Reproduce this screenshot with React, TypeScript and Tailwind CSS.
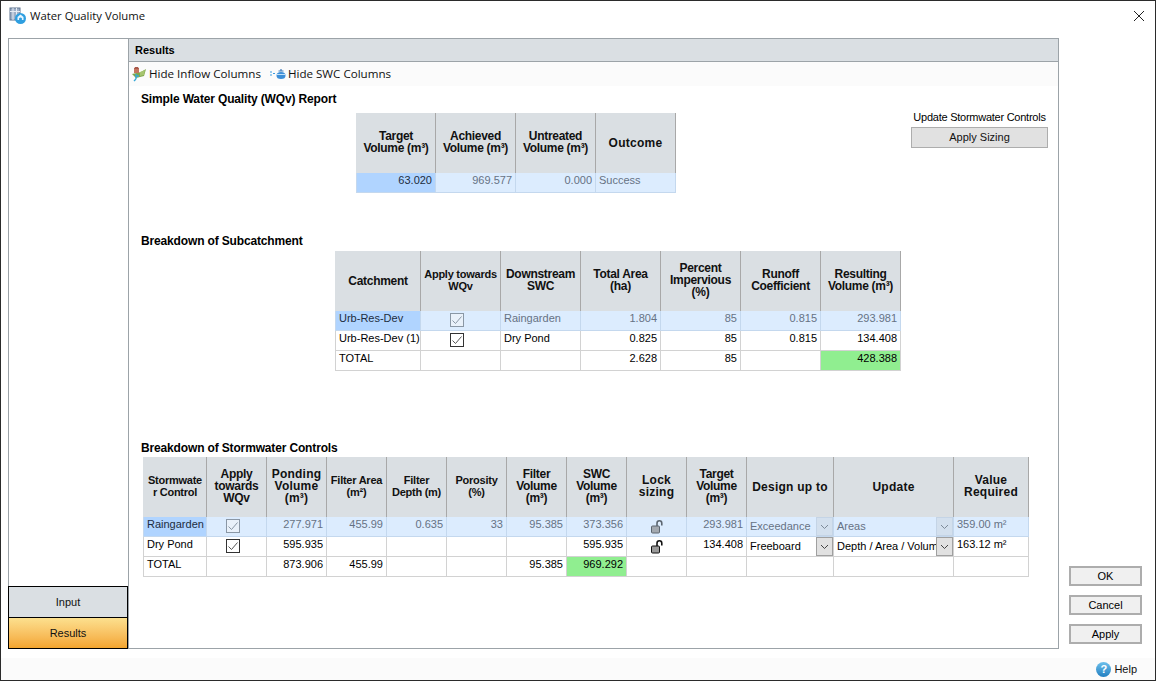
import type { ReactNode } from "react"

const sans = "font-['Liberation_Sans',Arial,sans-serif]"
const ui = "font-['Open_Sans','Noto_Sans',sans-serif]"

const normal = "pb-[3px] text-[12px] tracking-[-0.3px]"
const tight = "pb-[3px] text-[11px] tracking-[-0.25px]"
const wide = "pb-[3px] text-[12px] tracking-[0.25px]"
const single = "pb-[1px] text-[12px] tracking-[0.25px]"

function WindowIcon() {
  return (
    <svg width="18" height="18" viewBox="0 0 18 18">
      <rect x="1" y="1" width="10" height="12" fill="#9fb0c8" stroke="#5f7590" />
      <path d="M4 1v12M7.5 1v12M1 4.5h10" stroke="#e6ecf4" strokeWidth="1" />
      <circle cx="11.5" cy="11.5" r="5.5" fill="#2f9fe0" />
      <path d="M8.5 10l3-2.5 3 2.5v3h-6z" fill="#e8f6ff" />
      <circle cx="11.5" cy="12" r="1.6" fill="#2f9fe0" />
    </svg>
  )
}

function InflowIcon() {
  return (
    <svg width="16" height="16" viewBox="0 0 16 16">
      <path d="M1 8l9-2 5-3-2 7-8 2z" fill="#7fa64c" />
      <path d="M9 6l5-2-1 5-4 1z" fill="#a6c56f" />
      <path d="M3 2h5v5H3z" fill="#c4755f" />
      <path d="M4 1h3l1 2H3z" fill="#a8584a" />
      <path d="M5 8v5M5 13l-2 2M5 10h3" stroke="#35a8d8" strokeWidth="1.4" fill="none" />
    </svg>
  )
}

function SwcIcon() {
  return (
    <svg width="16" height="12" viewBox="0 0 16 12">
      <path d="M0 4h2M0 7h2M3 5.5h2" stroke="#3b9ce0" strokeWidth="1" />
      <ellipse cx="11" cy="7.5" rx="4.5" ry="3.5" fill="#3d8fd8" />
      <path d="M7 6.5h8" stroke="#bfe0f8" strokeWidth="1" />
      <path d="M8.5 3h5M11 1v2.5" stroke="#3978b8" strokeWidth="1.2" />
    </svg>
  )
}

function LockIcon({ faded }: { faded?: boolean }) {
  return (
    <svg className="mx-auto mt-[3px]" width="14" height="14" viewBox="0 0 14 14">
      <path d="M7 6V3.2a2.4 2.4 0 0 1 4.8 0V5.5" fill="none" stroke={faded ? "#5c6670" : "#111"} strokeWidth="1.6" />
      <path d="M8.8 3.4a1 1 0 0 1 1.3-1" fill="none" stroke="#fff" strokeWidth="0.6" />
      <rect x="1.5" y="6" width="8" height="7" rx="1" fill={faded ? "#a3a9b0" : "#9a9a9a"} stroke={faded ? "#5c6670" : "#111"} />
    </svg>
  )
}

function Check({ faded }: { faded?: boolean }) {
  return (
    <span className={`mt-[2px] mr-[8px] inline-flex h-[14px] w-[14px] items-center justify-center border ${faded ? "border-[#8a97a5] bg-[#e9f1fa]" : "border-[#333] bg-white"}`}>
      <svg width="12" height="12" viewBox="0 0 12 12">
        <path d="M1.5 6.5l3 3 6-7" fill="none" stroke={faded ? "#8a97a5" : "#555"} strokeWidth="1" />
      </svg>
    </span>
  )
}

function Combo({ text, faded }: { text: string; faded?: boolean }) {
  return (
    <div className="flex h-[19px] items-center justify-between overflow-hidden">
      <span className="overflow-hidden whitespace-nowrap pl-[3px]">{text}</span>
      <span className={`flex h-[19px] w-[17px] shrink-0 items-center justify-center border ${faded ? "border-[#c4d4e6] bg-[#d3e0ee]" : "border-[#a0a0a0] bg-[#e1e1e1]"}`}>
        <svg width="9" height="6" viewBox="0 0 9 6">
          <path d="M1 1l3.5 3.5L8 1" fill="none" stroke={faded ? "#7d8a98" : "#444"} strokeWidth="1" />
        </svg>
      </span>
    </div>
  )
}

type Cell = { v?: ReactNode; right?: boolean; center?: boolean; green?: boolean; flush?: boolean }

function Th({ children, first, cls = normal }: { children: ReactNode; first?: boolean; cls?: string }) {
  return (
    <th className={`h-[60px] whitespace-nowrap border-r border-r-[#a8a8a8] bg-[#dadfe3] px-0 pt-0 text-center align-middle font-bold leading-[12px] text-[#111] ${cls} ${first ? "border-l border-l-[#dadfe3]" : ""}`}>
      {children}
    </th>
  )
}

function Row({ cells, sel }: { cells: Cell[]; sel?: boolean }) {
  return (
    <tr>
      {cells.map((c, i) => {
        const tone = sel
          ? i === 0
            ? "border-[#c4d8ee] bg-[#b0d4ff] text-[#1c2c40]"
            : "border-[#c4d8ee] bg-[#dcecfe] text-[#667284]"
          : c.green
            ? "border-[#d2d2d2] bg-[#90ee90] text-black"
            : "border-[#d2d2d2] bg-white text-black"
        const align = c.right ? "pr-[3px] text-right" : c.center ? "text-center" : c.flush ? "" : "pl-[3px]"
        return (
          <td key={i} className={`h-[20px] overflow-hidden whitespace-nowrap border-b border-r p-0 align-top text-[11px] leading-[15px] ${i === 0 ? "border-l" : ""} ${tone} ${align}`}>
            {c.v}
          </td>
        )
      })}
    </tr>
  )
}

const r = (v?: ReactNode, green?: boolean): Cell => ({ v, right: true, green })
const l = (v?: ReactNode): Cell => ({ v })
const ctr = (v?: ReactNode): Cell => ({ v, center: true })

function SectionTitle({ children }: { children: ReactNode }) {
  return <div className="pl-[12px] text-[12px] font-bold leading-[14px] tracking-[-0.15px] text-black">{children}</div>
}

function SideButton({ children }: { children: ReactNode }) {
  return (
    <button className="h-[20px] w-[73px] border-2 border-[#adadad] bg-[#f0f0f0] text-[11px] leading-[14px] text-black">
      {children}
    </button>
  )
}

export default function App() {
  return (
    <div className={`flex h-[681px] w-[1156px] flex-col overflow-hidden border border-[#2b2b2b] bg-white ${sans}`}>
      {/* title bar */}
      <div className="flex h-[30px] shrink-0 items-center pl-[8px] pr-[10px]">
        <WindowIcon />
        <span className={`ml-[3px] text-[11.3px] text-[#111] ${ui}`}>Water Quality Volume</span>
        <svg className="ml-auto" width="12" height="12" viewBox="0 0 12 12">
          <path d="M1 1l10 10M11 1L1 11" stroke="#222" strokeWidth="1" />
        </svg>
      </div>

      <div className="flex min-h-0 flex-1 pl-[7px] pt-[7px]">
        {/* left nav */}
        <div className="flex h-[611px] w-[120px] shrink-0 flex-col">
          <div className="flex-1 border-l border-t border-[#9ca3a8]" />
          <div className="flex h-[31px] items-center justify-center border-x border-t border-black bg-[#dadfe3] text-[11px] text-[#111]">Input</div>
          <div className="flex h-[32px] items-center justify-center border border-black bg-gradient-to-b from-[#fce08e] to-[#f3a52e] text-[11px] text-[#111]">Results</div>
        </div>

        {/* results panel */}
        <div className="flex h-[611px] w-[931px] shrink-0 flex-col border border-[#9ca3a8]">
          <div className="flex h-[23px] shrink-0 items-center border-b border-[#9ca3a8] bg-[#dadfe3] pl-[6px] text-[11px] font-bold text-black">Results</div>
          <div className={`flex h-[24px] shrink-0 items-center bg-[#fbfbfb] pl-[2px] text-[11.6px] text-[#111] ${ui}`}>
            <InflowIcon />
            <span className="ml-[2px]">Hide Inflow Columns</span>
            <span className="ml-[9px]"><SwcIcon /></span>
            <span className="ml-[2px]">Hide SWC Columns</span>
          </div>

          <div className="mt-[6px]"><SectionTitle>Simple Water Quality (WQv) Report</SectionTitle></div>

          <div className="mt-[7px] flex pl-[227px]">
            <table className="w-[320px] table-fixed border-separate border-spacing-0">
              <colgroup>
                <col className="w-[80px]" /><col className="w-[80px]" /><col className="w-[80px]" /><col className="w-[80px]" />
              </colgroup>
              <thead>
                <tr>
                  <Th first>Target<br />Volume (m³)</Th>
                  <Th>Achieved<br />Volume (m³)</Th>
                  <Th>Untreated<br />Volume (m³)</Th>
                  <Th cls={single}>Outcome</Th>
                </tr>
              </thead>
              <tbody>
                <Row sel cells={[r("63.020"), r("969.577"), r("0.000"), l("Success")]} />
              </tbody>
            </table>
            <div className="ml-auto mr-[10px] -mt-[3px] flex w-[137px] flex-col items-center">
              <div className="whitespace-nowrap text-[11px] leading-[14px] tracking-[-0.25px] text-black">Update Stormwater Controls</div>
              <button className="mt-[3px] h-[21px] w-[137px] border border-[#adadad] bg-[#e1e1e1] text-[11px] text-[#111]">Apply Sizing</button>
            </div>
          </div>

          <div className="mt-[41px]"><SectionTitle>Breakdown of Subcatchment</SectionTitle></div>

          <div className="mt-[3px] pl-[206px]">
            <table className="w-[566px] table-fixed border-separate border-spacing-0">
              <colgroup>
                <col className="w-[86px]" /><col className="w-[80px]" /><col className="w-[80px]" /><col className="w-[80px]" /><col className="w-[80px]" /><col className="w-[80px]" /><col className="w-[80px]" />
              </colgroup>
              <thead>
                <tr>
                  <Th first cls="pb-[1px] text-[12px] tracking-[-0.3px]">Catchment</Th>
                  <Th cls={tight}>Apply towards<br />WQv</Th>
                  <Th>Downstream<br />SWC</Th>
                  <Th>Total Area<br />(ha)</Th>
                  <Th>Percent<br />Impervious<br />(%)</Th>
                  <Th>Runoff<br />Coefficient</Th>
                  <Th>Resulting<br />Volume (m³)</Th>
                </tr>
              </thead>
              <tbody>
                <Row sel cells={[l("Urb-Res-Dev"), ctr(<Check faded />), l("Raingarden"), r("1.804"), r("85"), r("0.815"), r("293.981")]} />
                <Row cells={[l("Urb-Res-Dev (1)"), ctr(<Check />), l("Dry Pond"), r("0.825"), r("85"), r("0.815"), r("134.408")]} />
                <Row cells={[l("TOTAL"), l(), l(), r("2.628"), r("85"), r(), r("428.388", true)]} />
              </tbody>
            </table>
          </div>

          <div className="mt-[70px]"><SectionTitle>Breakdown of Stormwater Controls</SectionTitle></div>

          <div className="mt-[2px] pl-[14px]">
            <table className="w-[886px] table-fixed border-separate border-spacing-0">
              <colgroup>
                <col className="w-[64px]" /><col className="w-[60px]" /><col className="w-[60px]" /><col className="w-[60px]" /><col className="w-[60px]" /><col className="w-[60px]" /><col className="w-[60px]" /><col className="w-[60px]" /><col className="w-[60px]" /><col className="w-[60px]" /><col className="w-[87px]" /><col className="w-[120px]" /><col className="w-[75px]" />
              </colgroup>
              <thead>
                <tr>
                  <Th first cls={tight}>Stormwate<br />r Control</Th>
                  <Th>Apply<br />towards<br />WQv</Th>
                  <Th cls={wide}>Ponding<br />Volume<br />(m³)</Th>
                  <Th cls={tight}>Filter Area<br />(m²)</Th>
                  <Th cls={tight}>Filter<br />Depth (m)</Th>
                  <Th cls={tight}>Porosity<br />(%)</Th>
                  <Th>Filter<br />Volume<br />(m³)</Th>
                  <Th>SWC<br />Volume<br />(m³)</Th>
                  <Th cls={wide}>Lock<br />sizing</Th>
                  <Th>Target<br />Volume<br />(m³)</Th>
                  <Th cls={single}>Design up to</Th>
                  <Th cls={single}>Update</Th>
                  <Th cls={wide}>Value<br />Required</Th>
                </tr>
              </thead>
              <tbody>
                <Row sel cells={[l("Raingarden"), ctr(<Check faded />), r("277.971"), r("455.99"), r("0.635"), r("33"), r("95.385"), r("373.356"), ctr(<LockIcon faded />), r("293.981"), { v: <Combo faded text="Exceedance" />, flush: true }, { v: <Combo faded text="Areas" />, flush: true }, l("359.00 m²")]} />
                <Row cells={[l("Dry Pond"), ctr(<Check />), r("595.935"), r(), r(), r(), r(), r("595.935"), ctr(<LockIcon />), r("134.408"), { v: <Combo text="Freeboard" />, flush: true }, { v: <Combo text="Depth / Area / Volume" />, flush: true }, l("163.12 m²")]} />
                <Row cells={[l("TOTAL"), l(), r("873.906"), r("455.99"), r(), r(), r("95.385"), r("969.292", true), l(), l(), l(), l(), l()]} />
              </tbody>
            </table>
          </div>
        </div>

        {/* ok / cancel / apply */}
        <div className="ml-[10px] flex flex-col gap-[9px] pt-[528px]">
          <SideButton>OK</SideButton>
          <SideButton>Cancel</SideButton>
          <SideButton>Apply</SideButton>
        </div>
      </div>

      {/* help strip */}
      <div className="flex h-[22px] shrink-0 items-center justify-end bg-[#fbfbfb] pr-[18px] text-[11px] text-[#111]">
        <span className="mr-[3px] flex h-[15px] w-[15px] items-center justify-center rounded-full bg-gradient-to-b from-[#6cc0ec] to-[#1f7fc0] text-[11px] font-bold leading-none text-white">?</span>
        Help
      </div>
    </div>
  )
}
